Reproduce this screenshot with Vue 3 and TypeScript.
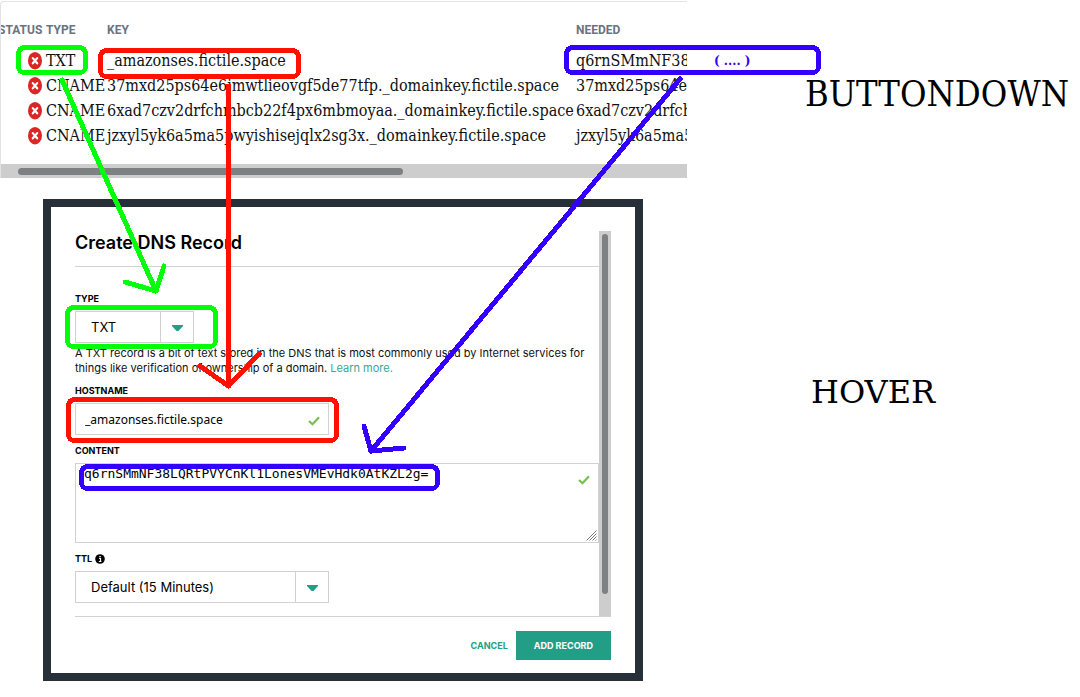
<script setup lang="ts">
import { ref } from 'vue'

interface DnsRow {
  type: string
  key: string
  needed: string
}

const rows: DnsRow[] = [
  { type: 'TXT', key: '_amazonses.fictile.space', needed: 'q6rnSMmNF38' },
  { type: 'CNAME', key: '37mxd25ps64e6jmwtlieovgf5de77tfp._domainkey.fictile.space', needed: '37mxd25ps64e6' },
  { type: 'CNAME', key: '6xad7czv2drfchmbcb22f4px6mbmoyaa._domainkey.fictile.space', needed: '6xad7czv2drfch' },
  { type: 'CNAME', key: 'jzxyl5yk6a5ma5pwyishisejqlx2sg3x._domainkey.fictile.space', needed: 'jzxyl5yk6a5ma5' },
]

const recordType = ref('TXT')
const hostname = ref('_amazonses.fictile.space')
const content = ref('q6rnSMmNF38LQRtPVYCnKl1LonesVMEvHdk0AtKZL2g=')
const ttl = ref('Default (15 Minutes)')
</script>

<template>
  <div class="page">
    <main class="left">
      <section class="records">
        <table>
          <colgroup>
            <col class="c-status" /><col class="c-type" /><col class="c-key" /><col class="c-needed" />
          </colgroup>
          <thead>
            <tr><th>STATUS</th><th>TYPE</th><th>KEY</th><th>NEEDED</th></tr>
          </thead>
          <tbody>
            <tr v-for="row in rows" :key="row.key">
              <td class="status">
                <svg width="14" height="18" viewBox="0 0 14 18" role="img" aria-label="Missing">
                  <ellipse cx="7" cy="8.7" rx="7" ry="8.7" fill="#dc2626" />
                  <path d="M4.8 6.1 L9.2 11.3 M9.2 6.1 L4.8 11.3" stroke="#fff" stroke-width="2.2" stroke-linecap="round" />
                </svg>
              </td>
              <td>{{ row.type }}</td>
              <td>{{ row.key }}</td>
              <td>{{ row.needed }}</td>
            </tr>
          </tbody>
        </table>
        <div class="hbar"><div class="hthumb"></div></div>
      </section>

      <section class="dialog">
        <div class="scroller">
          <form class="form" @submit.prevent>
            <h1>Create DNS Record</h1>
            <div class="field first">
              <label for="type">TYPE</label>
              <div class="select short">
                <select id="type" v-model="recordType"><option>TXT</option><option>CNAME</option></select>
                <span class="arrow"><svg width="11" height="6" viewBox="0 0 11 6"><path d="M0 0H11V1L6.5 6H4.5L0 1Z" fill="#229e87" /></svg></span>
              </div>
              <p>A TXT record is a bit of text stored in the DNS that is most commonly used by Internet services for things like verification of ownership of a domain. <a href="#">Learn more.</a></p>
            </div>
            <div class="field">
              <label for="host">HOSTNAME</label>
              <div class="inputbox">
                <input id="host" v-model="hostname" type="text" />
                <svg class="check" width="12" height="10" viewBox="0 0 12 10"><path d="M1 5 L4.5 8.3 L11 1.2" fill="none" stroke="#76c04e" stroke-width="2.2" /></svg>
              </div>
            </div>
            <div class="field">
              <label for="content">CONTENT</label>
              <div class="areabox">
                <textarea id="content" v-model="content" spellcheck="false"></textarea>
                <svg class="check" width="12" height="10" viewBox="0 0 12 10"><path d="M1 5 L4.5 8.3 L11 1.2" fill="none" stroke="#76c04e" stroke-width="2.2" /></svg>
                <svg class="grip" width="11" height="11" viewBox="0 0 11 11"><path d="M0.5 10.5 L10.5 0.5 M3.5 10.5 L10.5 3.5 M6.5 10.5 L10.5 6.5 M9.5 10.5 L10.5 9.5" stroke="#777" stroke-width="1" /></svg>
              </div>
            </div>
            <div class="field">
              <label for="ttl">TTL
                <svg width="10" height="10" viewBox="0 0 10 10"><circle cx="5" cy="5" r="4.8" /><path d="M4 4.3H5.5V7.5M3.8 7.5H6.4M4.3 2.5H5.7" fill="none" stroke="#fff" stroke-width="1.2" /></svg>
              </label>
              <div class="select">
                <select id="ttl" v-model="ttl"><option>Default (15 Minutes)</option></select>
                <span class="arrow"><svg width="11" height="6" viewBox="0 0 11 6"><path d="M0 0H11V1L6.5 6H4.5L0 1Z" fill="#229e87" /></svg></span>
              </div>
            </div>
          </form>
          <div class="vbar"><div class="vthumb"></div></div>
        </div>
        <div class="actions">
          <button type="button" class="cancel">CANCEL</button>
          <button type="button" class="add">ADD RECORD</button>
        </div>
      </section>
    </main>

    <aside class="names">
      <div class="name top">BUTTONDOWN</div>
      <div class="name bottom">HOVER</div>
    </aside>

    <svg class="marks" viewBox="0 0 1080 697" preserveAspectRatio="none" shape-rendering="crispEdges">
      <g stroke="#00ff09">
        <rect x="18.5" y="47.5" width="67" height="25" rx="6" />
        <rect x="67.5" y="307.5" width="148" height="39" rx="6" />
        <path d="M62 80 L156 291 M125 282 L156 291 L164 266" />
      </g>
      <g stroke="#ff1100">
        <rect x="100.5" y="50.5" width="198" height="26" rx="6" />
        <rect x="68.5" y="399.5" width="268" height="41" rx="6" />
        <path d="M228.5 86 V386 M200 366 L228.5 386 L259 354" />
      </g>
      <g stroke="#3300ff">
        <rect x="566.5" y="47.5" width="252" height="25" rx="6" />
        <rect x="81.5" y="466.5" width="356" height="22" rx="6" />
        <path d="M680 79 L371 451 M364 426 L371 451 L404 448" />
      </g>
      <text x="714" y="65">( .... )</text>
    </svg>
  </div>
</template>

<style>
body { background: #fff; overflow: hidden; }
</style>

<style scoped>
* { box-sizing: border-box; }
.page {
  position: relative;
  display: grid;
  grid-template-columns: 687fr 393fr;
  color: #000;
  font-family: Inter, "Liberation Sans", sans-serif;
}
.left { min-width: 0; padding-top: 1px; padding-bottom: 16px; }
.records {
  overflow: hidden;
  border-top: 1px solid #e3e3e3;
  border-left: 1px solid #e3e3e3;
  border-top-left-radius: 4px;
  padding-top: 16px;
}
table {
  table-layout: fixed;
  width: 960px;
  margin: 0 0 16px -3px;
  border-collapse: collapse;
  font: 16px/24px "DejaVu Serif Condensed", "DejaVu Serif", serif;
}
.c-status { width: 48px; }
.c-type { width: 61px; }
.c-key { width: 469px; }
th {
  padding: 0;
  height: 30px;
  padding-bottom: 6px;
  text-align: left;
  font: 700 12px/24px Roboto, "Liberation Sans", sans-serif;
  color: #6b7280;
}
td { padding: 0; height: 25px; white-space: nowrap; color: #111; }
.status { text-align: right; padding-right: 4px; }
.status svg { display: block; margin-left: auto; }
.hbar { height: 14px; padding: 4px 0 3px 17px; background: #cdcdcd; }
.hthumb { width: 57.5%; height: 7px; border-radius: 4px; background: #7d8181; }
.dialog {
  margin: 21px 44px 0 43px;
  padding: 24px 24px 13px;
  border: 8px solid #272f38;
}
.scroller { display: flex; border-bottom: 1px solid #d2d2d2; }
.form { flex: 1; min-width: 0; padding-bottom: 13px; }
h1 { margin: 0; padding-bottom: 11px; border-bottom: 1px solid #d2d2d2; font-size: 18px; line-height: 24px; font-weight: 600; }
.field { padding-top: 8px; }
.field.first { padding-top: 24px; }
.field label { display: flex; align-items: center; gap: 3px; height: 16px; margin-bottom: 4px; font-size: 9px; line-height: 16px; font-weight: 700; }
.select, .inputbox { display: flex; align-items: center; position: relative; width: 254px; height: 32px; border: 1px solid #d2d2d2; }
.select.short { width: 119px; }
select { appearance: none; flex: 1; min-width: 0; height: 30px; padding: 0 0 0 15px; border: 0; background: transparent; color: #000; font: 13px/20px Inter, sans-serif; }
.arrow { display: flex; align-items: center; justify-content: center; width: 33px; height: 30px; padding-top: 2px; border-left: 1px solid #d2d2d2; }
p { margin: 3px 0 -1px; font-size: 11px; line-height: 15px; color: #111; }
a { color: #36a894; text-decoration: none; }
input { flex: 1; min-width: 0; height: 30px; padding: 0 9px; border: 0; background: transparent; color: #000; font: 12px/20px "Noto Sans", sans-serif; }
.inputbox .check { margin: 4px 8px 0 0; }
.areabox { position: relative; }
textarea { display: block; width: 100%; height: 80px; resize: none; padding: 2px 8px; border: 1px solid #d2d2d2; color: #000; background: transparent; font: 13px/16px "DejaVu Sans Mono", monospace; overflow: hidden; }
.areabox .check { position: absolute; top: 12px; right: 9px; }
.grip { position: absolute; right: 2px; bottom: 2px; }
.vbar { width: 12px; padding: 3px 3px 22px; background: #cdcdcd; display: flex; }
.vthumb { flex: 1; border-radius: 3px; background: #7d8181; }
.actions { display: flex; justify-content: flex-end; gap: 8px; padding-top: 14px; }
button { height: 29px; border: 0; font: 700 9px/16px Inter, sans-serif; }
.cancel { padding: 0; background: none; color: #229e87; }
.add { padding: 0 18px; background: #229e87; color: #fff; }
.names { display: flex; flex-direction: column; gap: 250px; padding-top: 70px; min-width: 0; }
.name { font-family: "DejaVu Serif Condensed", "DejaVu Serif", serif; line-height: 48px; white-space: nowrap; }
.top { padding-left: 118px; font-size: 36px; }
.bottom { padding-left: 124px; font-family: "DejaVu Serif", serif; font-size: 32px; }
.marks { position: absolute; top: 0; left: 0; width: 100%; height: 697px; pointer-events: none; fill: none; stroke-width: 5; stroke-linecap: round; stroke-linejoin: round; }
.marks text { fill: #3300ff; font: 700 12px "DejaVu Serif", serif; }
</style>
